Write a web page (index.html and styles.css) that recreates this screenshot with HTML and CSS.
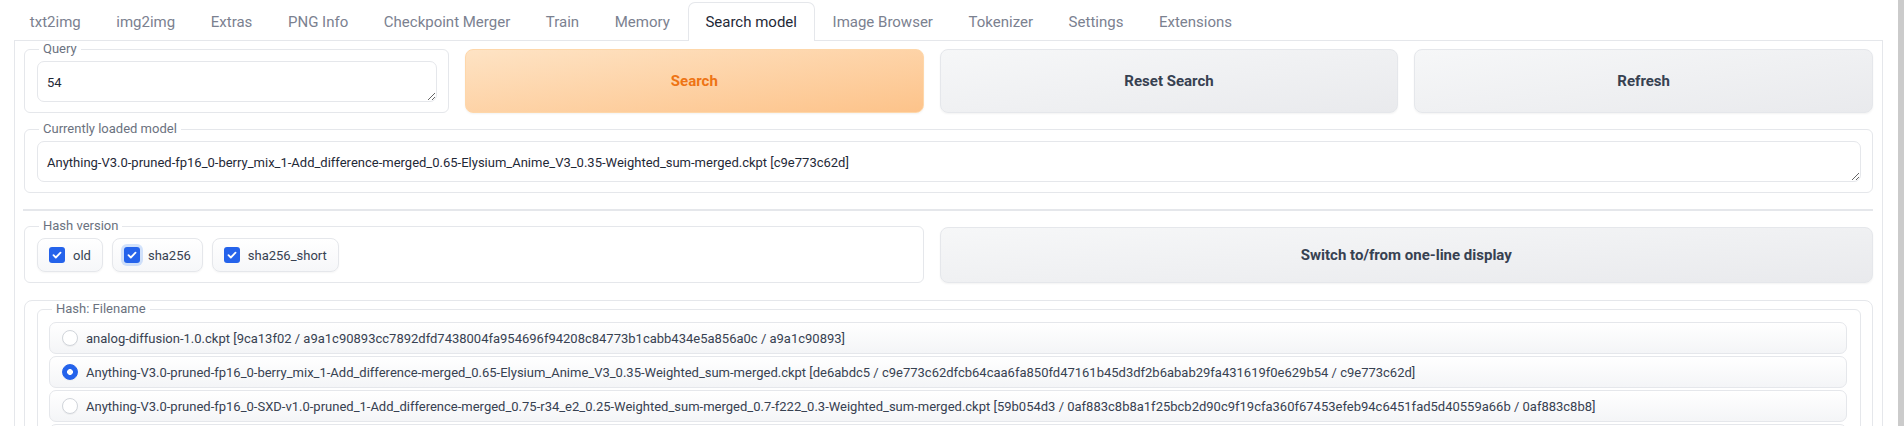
FILE: index.html
```html
<!DOCTYPE html>
<html lang="en">
<head>
<meta charset="utf-8">
<title>Search model</title>
<link rel="stylesheet" href="styles.css">
</head>
<body>
<div class="page">
  <div class="main">
    <nav class="tabs">
      <button class="tab">txt2img</button>
      <button class="tab">img2img</button>
      <button class="tab">Extras</button>
      <button class="tab">PNG Info</button>
      <button class="tab">Checkpoint Merger</button>
      <button class="tab">Train</button>
      <button class="tab">Memory</button>
      <button class="tab active">Search model</button>
      <button class="tab">Image Browser</button>
      <button class="tab">Tokenizer</button>
      <button class="tab">Settings</button>
      <button class="tab">Extensions</button>
    </nav>
    <section class="panel">
      <div class="grid4 row-query">
        <fieldset class="box box-query">
          <legend>Query</legend>
          <textarea class="field" rows="1">54</textarea>
        </fieldset>
        <button class="btn primary btn-top">Search</button>
        <button class="btn secondary btn-top">Reset Search</button>
        <button class="btn secondary btn-top">Refresh</button>
      </div>

      <fieldset class="box box-model">
        <legend>Currently loaded model</legend>
        <textarea class="field" rows="1">Anything-V3.0-pruned-fp16_0-berry_mix_1-Add_difference-merged_0.65-Elysium_Anime_V3_0.35-Weighted_sum-merged.ckpt [c9e773c62d]</textarea>
      </fieldset>

      <div class="separator"></div>

      <div class="grid4 row-hash">
        <fieldset class="box box-hash">
          <legend>Hash version</legend>
          <div class="checks">
            <label class="check"><span class="cb"><svg viewBox="0 0 16 16" width="16" height="16"><path d="M4.5 8.2l2.3 2.3 4.7-4.8" fill="none" stroke="#fff" stroke-width="1.8" stroke-linecap="round" stroke-linejoin="round"/></svg></span>old</label>
            <label class="check"><span class="cb focus"><svg viewBox="0 0 16 16" width="16" height="16"><path d="M4.5 8.2l2.3 2.3 4.7-4.8" fill="none" stroke="#fff" stroke-width="1.8" stroke-linecap="round" stroke-linejoin="round"/></svg></span>sha256</label>
            <label class="check"><span class="cb"><svg viewBox="0 0 16 16" width="16" height="16"><path d="M4.5 8.2l2.3 2.3 4.7-4.8" fill="none" stroke="#fff" stroke-width="1.8" stroke-linecap="round" stroke-linejoin="round"/></svg></span>sha256_short</label>
          </div>
        </fieldset>
        <button class="btn secondary btn-switch">Switch to/from one-line display</button>
      </div>

      <div class="outer">
        <fieldset class="box box-files">
          <legend>Hash: Filename</legend>
          <div class="radios">
            <label class="radio"><span class="rd"></span>analog-diffusion-1.0.ckpt [9ca13f02 / a9a1c90893cc7892dfd7438004fa954696f94208c84773b1cabb434e5a856a0c / a9a1c90893]</label>
            <label class="radio"><span class="rd on"></span>Anything-V3.0-pruned-fp16_0-berry_mix_1-Add_difference-merged_0.65-Elysium_Anime_V3_0.35-Weighted_sum-merged.ckpt [de6abdc5 / c9e773c62dfcb64caa6fa850fd47161b45d3df2b6abab29fa431619f0e629b54 / c9e773c62d]</label>
            <label class="radio"><span class="rd"></span>Anything-V3.0-pruned-fp16_0-SXD-v1.0-pruned_1-Add_difference-merged_0.75-r34_e2_0.25-Weighted_sum-merged_0.7-f222_0.3-Weighted_sum-merged.ckpt [59b054d3 / 0af883c8b8a1f25bcb2d90c9f19cfa360f67453efeb94c6451fad5d40559a66b / 0af883c8b8]</label>
            <div class="radio radio-empty"></div>
          </div>
        </fieldset>
      </div>
    </section>
  </div>
  <div class="scrollbar"></div>
</div>
</body>
</html>
```
FILE: styles.css
```css
html, body {
  margin: 0;
  height: 426px;
  overflow: hidden;
  background: #fff;
}
body {
  font-family: Roboto, "Liberation Sans", sans-serif;
  color: #1f2937;
}
.page {
  display: flex;
  height: 426px;
}
.main {
  flex: 1;
  min-width: 0;
  padding: 2px 15px 0 14px;
}
.scrollbar {
  width: 6px;
  background: #cbcbcb;
}

/* tabs */
.tabs {
  display: flex;
  height: 38px;
  margin-left: -2px;
}
.tab {
  font: 400 15px/36px Roboto, sans-serif;
  color: #7b8190;
  background: none;
  border: 1px solid transparent;
  border-bottom: none;
  padding: 0 16.8px;
  margin: 0;
  height: 38px;
  cursor: pointer;
  white-space: nowrap;
}
.tab.active {
  color: #1f2937;
  background: #fff;
  border-color: #e5e7eb;
  border-radius: 7px 7px 0 0;
  height: 39px;
  position: relative;
  z-index: 1;
}

/* panel */
.panel {
  border: 1px solid #e5e7eb;
  border-bottom: none;
  padding: 0 9px;
  height: 400px;
}
.grid4 {
  display: grid;
  grid-template-columns: 425px repeat(3, 1fr);
  column-gap: 16px;
  align-items: start;
}

/* fieldset boxes */
.box {
  margin: 0;
  min-width: 0;
  border: 1px solid #e5e7eb;
  border-radius: 6px;
  padding: 4px 11px 10px 12px;
}
.box legend {
  font: 400 13px/16px Roboto, sans-serif;
  color: #6b7280;
  padding: 0 4px;
  margin-left: 2px;
}
.field {
  display: block;
  width: 100%;
  box-sizing: border-box;
  height: 41px;
  margin: 0;
  padding: 12px 9px 0;
  border: 1px solid #e5e7eb;
  border-radius: 7px;
  font: 400 13px/17px Roboto, sans-serif;
  color: #1f2937;
  background: #fff;
  resize: vertical;
  overflow: hidden;
  white-space: nowrap;
  outline: none;
}

/* buttons */
.btn {
  margin: 0;
  border-radius: 8px;
  font: 700 15px Roboto, sans-serif;
  cursor: pointer;
  box-shadow: 0 1px 2px rgba(0, 0, 0, 0.05);
}
.primary {
  color: #ee7414;
  border: 1px solid #fed7aa;
  background: linear-gradient(to bottom right, #fee3c4, #fdc38a);
}
.secondary {
  color: #374151;
  border: 1px solid #e5e7eb;
  background: linear-gradient(to bottom right, #f6f7f8, #e9eaed);
}
.btn-top {
  margin-top: 8px;
  height: 64px;
}
.btn-switch {
  grid-column: 3 / 5;
  margin-top: 9px;
  height: 56px;
}

.box-model {
  margin-top: 8px;
}
.separator {
  height: 2px;
  background: #e5e7eb;
  margin: 16px 0 7px -1px;
}

/* checkboxes */
.box-hash {
  grid-column: 1 / 3;
}
.checks {
  display: flex;
  gap: 9px;
}
.check {
  display: flex;
  align-items: center;
  gap: 8px;
  height: 34px;
  box-sizing: border-box;
  padding: 0 11px;
  border: 1px solid #e5e7eb;
  border-radius: 8px;
  background: linear-gradient(to bottom, #fff, #f6f7f9);
  box-shadow: 0 1px 2px rgba(0, 0, 0, 0.04);
  font: 400 13px Roboto, sans-serif;
  color: #374151;
}
.cb {
  width: 16px;
  height: 16px;
  border-radius: 3px;
  background: #2563eb;
  display: flex;
}
.cb.focus {
  box-shadow: 0 0 0 3px rgba(59, 130, 246, 0.22);
}

/* radios */
.outer {
  margin-top: 17px;
  border: 1px solid #e5e7eb;
  border-radius: 8px;
  padding: 0 11px 10px 12px;
}
.box-files {
  padding: 5px 13px 10px 11px;
}
.box-files legend {
  margin-left: 3px;
}
.radios {
  display: flex;
  flex-direction: column;
  gap: 2px;
}
.radio {
  display: flex;
  align-items: center;
  gap: 8px;
  box-sizing: border-box;
  height: 32px;
  padding: 0 12px;
  border: 1px solid #e5e7eb;
  border-radius: 7px;
  background: linear-gradient(to bottom, #fff, #f4f5f7);
  font: 400 13px Roboto, sans-serif;
  color: #374151;
  white-space: nowrap;
}
.rd {
  flex: none;
  width: 16px;
  height: 16px;
  box-sizing: border-box;
  border-radius: 50%;
  border: 1px solid #d1d5db;
  background: #fff;
  box-shadow: 0 1px 1px rgba(0, 0, 0, 0.04);
}
.rd.on {
  border-color: #2563eb;
  background: radial-gradient(circle, #fff 0 2.6px, #2563eb 3.2px);
}
```
